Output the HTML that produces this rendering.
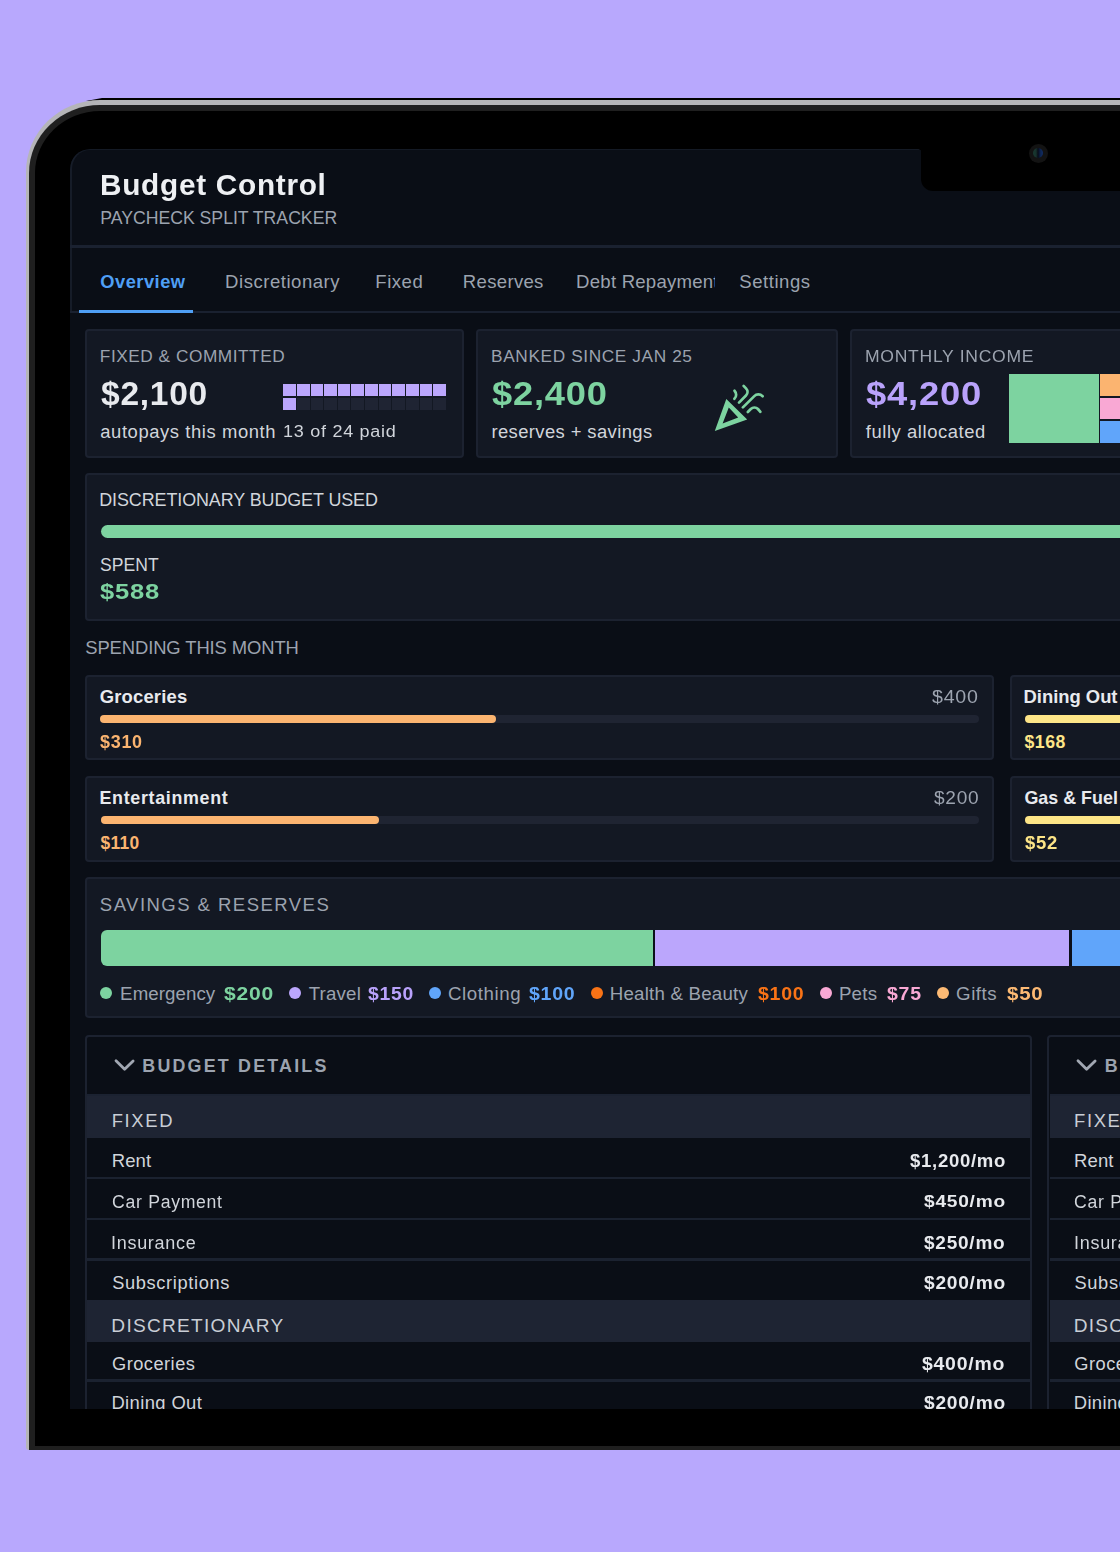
<!DOCTYPE html>
<html><head><meta charset="utf-8"><style>
html,body{margin:0;padding:0;}
body{width:1120px;height:1552px;background:#b8a8fd;position:relative;overflow:hidden;font-family:"Liberation Sans",sans-serif;}
.t{position:absolute;white-space:nowrap;line-height:1;}
.card{position:absolute;background:#131823;border:2px solid #1c2230;border-radius:4px;box-sizing:border-box;}
</style></head><body>
<!-- device frame -->
<div style="position:absolute;left:86px;top:97.9px;width:1100px;height:3px;background:#000;clip-path:polygon(0 100%,16px 0,100% 0,100% 100%)"></div>
<div style="position:absolute;left:26px;top:100px;width:1200px;height:1350px;background:#b5b5b8;border-top-left-radius:74px 72px;border-bottom-left-radius:3px"></div>
<div style="position:absolute;left:29px;top:104.6px;width:1200px;height:1345px;background:#1f1f1f;border-top-left-radius:71px 68px;"></div>
<div style="position:absolute;left:35px;top:111px;width:1200px;height:1334.7px;background:#000;border-top-left-radius:65px 62px;"></div>
<!-- screen -->
<div id="screen" style="position:absolute;left:70px;top:149px;width:1100px;height:1260px;background:#0a0e16;border-top-left-radius:20px;overflow:hidden">
  <div style="position:absolute;left:0;top:0;width:1100px;height:162px;box-sizing:border-box;border-left:2px solid #161c28;border-top:1px solid #141a25;border-top-left-radius:20px"></div>
  <div style="position:absolute;left:0;top:96.3px;width:1100px;height:3px;background:#1a2130"></div>
  <div style="position:absolute;left:0;top:162px;width:1100px;height:2px;background:#1a2130"></div>
  <div style="position:absolute;left:9px;top:161px;width:114px;height:2.6px;background:#4f9ff5"></div>
</div>
<!-- notch -->
<div style="position:absolute;left:921px;top:140px;width:300px;height:50.7px;background:#000;border-bottom-left-radius:12px"></div>
<div style="position:absolute;left:1028.8px;top:143.6px;width:19px;height:19px;border-radius:50%;background:#131313;filter:blur(0.6px)"></div>
<div style="position:absolute;left:1033px;top:148.3px;width:10px;height:10px;border-radius:50%;background:linear-gradient(90deg,#1b4a3e 0%,#1a3f38 30%,#040a1a 50%,#0a2a6a 75%,#123a8a 100%);filter:blur(0.5px);opacity:0.7"></div>
<div style="position:absolute;left:918px;top:149px;width:4px;height:4px;background:radial-gradient(circle at 0 100%, transparent 3.5px, #000 4px)"></div>
<!-- cards row -->
<div class="card" style="left:85.1px;top:328.8px;width:378.7px;height:129.1px"></div>
<div class="card" style="left:475.9px;top:328.8px;width:362.4px;height:129.1px"></div>
<div class="card" style="left:849.7px;top:328.8px;width:400px;height:129.1px"></div>
<div style="position:absolute;left:283.30px;top:383.9px;width:12.6px;height:12.6px;background:#bba6fc"></div><div style="position:absolute;left:296.93px;top:383.9px;width:12.6px;height:12.6px;background:#bba6fc"></div><div style="position:absolute;left:310.56px;top:383.9px;width:12.6px;height:12.6px;background:#bba6fc"></div><div style="position:absolute;left:324.19px;top:383.9px;width:12.6px;height:12.6px;background:#bba6fc"></div><div style="position:absolute;left:337.82px;top:383.9px;width:12.6px;height:12.6px;background:#bba6fc"></div><div style="position:absolute;left:351.45px;top:383.9px;width:12.6px;height:12.6px;background:#bba6fc"></div><div style="position:absolute;left:365.08px;top:383.9px;width:12.6px;height:12.6px;background:#bba6fc"></div><div style="position:absolute;left:378.71px;top:383.9px;width:12.6px;height:12.6px;background:#bba6fc"></div><div style="position:absolute;left:392.34px;top:383.9px;width:12.6px;height:12.6px;background:#bba6fc"></div><div style="position:absolute;left:405.97px;top:383.9px;width:12.6px;height:12.6px;background:#bba6fc"></div><div style="position:absolute;left:419.60px;top:383.9px;width:12.6px;height:12.6px;background:#bba6fc"></div><div style="position:absolute;left:433.23px;top:383.9px;width:12.6px;height:12.6px;background:#bba6fc"></div><div style="position:absolute;left:283.30px;top:397.6px;width:12.6px;height:12.6px;background:#bba6fc"></div><div style="position:absolute;left:296.93px;top:397.6px;width:12.6px;height:12.6px;background:#1f2433"></div><div style="position:absolute;left:310.56px;top:397.6px;width:12.6px;height:12.6px;background:#1f2433"></div><div style="position:absolute;left:324.19px;top:397.6px;width:12.6px;height:12.6px;background:#1f2433"></div><div style="position:absolute;left:337.82px;top:397.6px;width:12.6px;height:12.6px;background:#1f2433"></div><div style="position:absolute;left:351.45px;top:397.6px;width:12.6px;height:12.6px;background:#1f2433"></div><div style="position:absolute;left:365.08px;top:397.6px;width:12.6px;height:12.6px;background:#1f2433"></div><div style="position:absolute;left:378.71px;top:397.6px;width:12.6px;height:12.6px;background:#1f2433"></div><div style="position:absolute;left:392.34px;top:397.6px;width:12.6px;height:12.6px;background:#1f2433"></div><div style="position:absolute;left:405.97px;top:397.6px;width:12.6px;height:12.6px;background:#1f2433"></div><div style="position:absolute;left:419.60px;top:397.6px;width:12.6px;height:12.6px;background:#1f2433"></div><div style="position:absolute;left:433.23px;top:397.6px;width:12.6px;height:12.6px;background:#1f2433"></div>
<svg style="position:absolute;left:700px;top:370px" width="80" height="70" viewBox="700 370 80 70">
 <path fill="#7dd3a0" fill-rule="evenodd" d="M714.8 431 L726.3 399 L747.2 419.4 Z M728.8 407.6 L722.6 423.6 L738.2 417.6 Z"/>
 <g fill="none" stroke="#7dd3a0" stroke-width="2.7" stroke-linecap="round" stroke-linejoin="miter">
  
  <path d="M734.5 390.8 C736.6 393 736.8 396.6 734.4 398.8"/>
  <path d="M743.6 385.9 L746 388.4 C748 390.6 748 393.5 746 395.5 L739 402.6"/>
  <path d="M742.9 407.4 L754.3 396.1 C756.5 393.9 760.2 393.9 762.6 396.2"/>
  <path d="M747.8 412 L750.8 409 C752.8 407 756 407 758 409 L760.4 411.8"/>
 </g>
</svg>
<div style="position:absolute;left:1008.75px;top:374.25px;width:90px;height:68.25px;background:#7dd3a0"></div>
<div style="position:absolute;left:1100.25px;top:374.25px;width:40px;height:21.5px;background:#fbb470"></div>
<div style="position:absolute;left:1100.25px;top:397.75px;width:40px;height:21.5px;background:#f9a8d4"></div>
<div style="position:absolute;left:1100.25px;top:421px;width:40px;height:21.5px;background:#60a5fa"></div>

<!-- discretionary -->
<div class="card" style="left:85.1px;top:472.6px;width:1100px;height:148.6px"></div>
<div style="position:absolute;left:100.7px;top:525.2px;width:1100px;height:13px;border-radius:6.5px;background:#7dd3a0"></div>

<!-- spending cards -->
<div class="card" style="left:85.1px;top:674.8px;width:908.8px;height:85.2px"></div>
<div class="card" style="left:1009.7px;top:674.8px;width:400px;height:85.2px"></div>
<div class="card" style="left:85.1px;top:776px;width:908.8px;height:85.6px"></div>
<div class="card" style="left:1009.6px;top:776px;width:400px;height:85.6px"></div>
<div style="position:absolute;left:100.4px;top:715px;width:878.6px;height:7.7px;border-radius:4px;background:#1f2432"></div>
<div style="position:absolute;left:100.4px;top:715px;width:395.3px;height:7.7px;border-radius:4px;background:#fbb470"></div>
<div style="position:absolute;left:1024.7px;top:715px;width:400px;height:7.7px;border-radius:4px;background:#fde587"></div>
<div style="position:absolute;left:100.6px;top:816.4px;width:878.4px;height:7.7px;border-radius:4px;background:#1f2432"></div>
<div style="position:absolute;left:100.6px;top:816.4px;width:278.5px;height:7.7px;border-radius:4px;background:#fbb470"></div>
<div style="position:absolute;left:1025.1px;top:816.4px;width:400px;height:7.7px;border-radius:4px;background:#fde587"></div>

<!-- savings -->
<div class="card" style="left:85.1px;top:877.1px;width:1100px;height:141.4px"></div>
<div style="position:absolute;left:100.7px;top:930.3px;width:1100px;height:36.1px;border-radius:6px;overflow:hidden;background:#0b0f19">
  <div style="position:absolute;left:0;top:0;width:552.2px;height:100%;background:#7dd3a0"></div>
  <div style="position:absolute;left:554.4px;top:0;width:414.3px;height:100%;background:#bba6fc"></div>
  <div style="position:absolute;left:971.6px;top:0;width:300px;height:100%;background:#60a5fa"></div>
</div>
<div style="position:absolute;left:100.1px;top:987.2px;width:12px;height:12px;border-radius:50%;background:#7dd3a0"></div>
<div style="position:absolute;left:288.6px;top:987.2px;width:12px;height:12px;border-radius:50%;background:#bba6fc"></div>
<div style="position:absolute;left:429.4px;top:987.2px;width:12px;height:12px;border-radius:50%;background:#60a5fa"></div>
<div style="position:absolute;left:591.4px;top:987.2px;width:12px;height:12px;border-radius:50%;background:#f97316"></div>
<div style="position:absolute;left:819.9px;top:987.2px;width:12px;height:12px;border-radius:50%;background:#f9a8d4"></div>
<div style="position:absolute;left:936.6px;top:987.2px;width:12px;height:12px;border-radius:50%;background:#fdba74"></div>

<!-- budget details -->
<div id="bd" style="position:absolute;left:0;top:0;width:1120px;height:1408.7px;overflow:hidden">

<div style="position:absolute;left:85.1px;top:1034.5px;width:946.5px;height:500px;background:#0a0e16;border:2px solid #1c2230;border-radius:4px;box-sizing:border-box"></div>
<div style="position:absolute;left:87.3px;top:1093.9px;width:942.8px;height:43.9px;background:#1e2433;border-top:2px solid #1b2231;box-sizing:border-box"></div>
<div style="position:absolute;left:87.3px;top:1299.7px;width:942.8px;height:42.2px;background:#1e2433"></div>
<div style="position:absolute;left:87.3px;top:1176.6px;width:942.8px;height:2.4px;background:#1b2230"></div>
<div style="position:absolute;left:87.3px;top:1217.6px;width:942.8px;height:2.4px;background:#1b2230"></div>
<div style="position:absolute;left:87.3px;top:1258.3px;width:942.8px;height:2.4px;background:#1b2230"></div>
<div style="position:absolute;left:87.3px;top:1379.2px;width:942.8px;height:2.4px;background:#1b2230"></div>
<svg style="position:absolute;left:113px;top:1058px" width="24" height="16" viewBox="0 0 24 16"><path d="M3 2.8 L11.6 11.3 L20.1 2.9" fill="none" stroke="#a1a7b2" stroke-width="2.8" stroke-linecap="round" stroke-linejoin="round"/></svg>

<div style="position:absolute;left:1047.3999999999999px;top:1034.5px;width:946.5px;height:500px;background:#0a0e16;border:2px solid #1c2230;border-radius:4px;box-sizing:border-box"></div>
<div style="position:absolute;left:1049.6px;top:1093.9px;width:942.8px;height:43.9px;background:#1e2433;border-top:2px solid #1b2231;box-sizing:border-box"></div>
<div style="position:absolute;left:1049.6px;top:1299.7px;width:942.8px;height:42.2px;background:#1e2433"></div>
<div style="position:absolute;left:1049.6px;top:1176.6px;width:942.8px;height:2.4px;background:#1b2230"></div>
<div style="position:absolute;left:1049.6px;top:1217.6px;width:942.8px;height:2.4px;background:#1b2230"></div>
<div style="position:absolute;left:1049.6px;top:1258.3px;width:942.8px;height:2.4px;background:#1b2230"></div>
<div style="position:absolute;left:1049.6px;top:1379.2px;width:942.8px;height:2.4px;background:#1b2230"></div>
<svg style="position:absolute;left:1075.3px;top:1058px" width="24" height="16" viewBox="0 0 24 16"><path d="M3 2.8 L11.6 11.3 L20.1 2.9" fill="none" stroke="#a1a7b2" stroke-width="2.8" stroke-linecap="round" stroke-linejoin="round"/></svg>
<div class="t" style="left:99.93px;top:170px;font-size:29.43px;letter-spacing:0.700px;font-weight:700;color:#eef0f3;transform:scaleX(1.0120);transform-origin:0 0">Budget Control</div>
<div class="t" style="left:100.29px;top:210px;font-size:17.68px;letter-spacing:-0.021px;color:#9ca3af">PAYCHECK SPLIT TRACKER</div>
<div class="t" style="left:100.37px;top:273px;font-size:18.29px;letter-spacing:0.481px;font-weight:700;color:#4f9ff5">Overview</div>
<div class="t" style="left:225.12px;top:273px;font-size:18.55px;letter-spacing:0.528px;color:#9ca3af">Discretionary</div>
<div class="t" style="left:375.32px;top:273px;font-size:18.55px;letter-spacing:0.516px;color:#9ca3af">Fixed</div>
<div class="t" style="left:462.82px;top:273px;font-size:18.55px;letter-spacing:0.327px;color:#9ca3af">Reserves</div>
<div class="t" style="left:739.26px;top:273px;font-size:18.55px;letter-spacing:0.553px;color:#9ca3af">Settings</div>
<div style="position:absolute;left:0;top:0;width:715px;height:400px;overflow:hidden"><div class="t" style="left:576.11px;top:273px;font-size:18.60px;letter-spacing:0.220px;color:#9ca3af">Debt Repayment</div></div>
<div class="t" style="left:99.87px;top:348px;font-size:17.25px;letter-spacing:0.529px;color:#9ca3af">FIXED &amp; COMMITTED</div>
<div class="t" style="left:100.68px;top:378px;font-size:32.29px;letter-spacing:0.700px;font-weight:700;color:#e8eaee;transform:scaleX(1.0391);transform-origin:0 0">$2,100</div>
<div class="t" style="left:100.26px;top:423px;font-size:18.41px;letter-spacing:0.586px;color:#d1d5db">autopays this month</div>
<div class="t" style="left:282.79px;top:423px;font-size:17.25px;letter-spacing:0.700px;color:#d1d5db;transform:scaleX(1.0429);transform-origin:0 0">13 of 24 paid</div>
<div class="t" style="left:491.12px;top:348px;font-size:17.25px;letter-spacing:0.613px;color:#9ca3af">BANKED SINCE JAN 25</div>
<div class="t" style="left:492.18px;top:378px;font-size:32.29px;letter-spacing:0.700px;font-weight:700;color:#7dd3a0;transform:scaleX(1.1245);transform-origin:0 0">$2,400</div>
<div class="t" style="left:491.40px;top:423px;font-size:18.41px;letter-spacing:0.400px;color:#d1d5db">reserves + savings</div>
<div class="t" style="left:864.87px;top:348px;font-size:17.25px;letter-spacing:0.700px;color:#9ca3af;transform:scaleX(1.0174);transform-origin:0 0">MONTHLY INCOME</div>
<div class="t" style="left:865.68px;top:378px;font-size:32.29px;letter-spacing:0.700px;font-weight:700;color:#b9a2fb;transform:scaleX(1.1265);transform-origin:0 0">$4,200</div>
<div class="t" style="left:865.82px;top:423px;font-size:18.41px;letter-spacing:0.568px;color:#d1d5db">fully allocated</div>
<div class="t" style="left:99.26px;top:492px;font-size:17.95px;letter-spacing:-0.100px;color:#d1d5db">DISCRETIONARY BUDGET USED</div>
<div class="t" style="left:100.00px;top:557px;font-size:17.54px;letter-spacing:0.075px;color:#d1d5db">SPENT</div>
<div class="t" style="left:100.48px;top:581px;font-size:22.00px;letter-spacing:0.700px;font-weight:700;color:#7dd3a0;transform:scaleX(1.1603);transform-origin:0 0">$588</div>
<div class="t" style="left:85.26px;top:639px;font-size:18.41px;letter-spacing:-0.100px;color:#9ca3af">SPENDING THIS MONTH</div>
<div class="t" style="left:99.66px;top:688px;font-size:18.43px;letter-spacing:0.182px;font-weight:700;color:#e8eaee">Groceries</div>
<div class="t" style="left:932.41px;top:688px;font-size:18.70px;letter-spacing:0.700px;color:#9ca3af;transform:scaleX(1.0507);transform-origin:0 0">$400</div>
<div class="t" style="left:100.22px;top:734px;font-size:17.71px;letter-spacing:0.700px;font-weight:700;color:#fbb470;transform:scaleX(1.0150);transform-origin:0 0">$310</div>
<div class="t" style="left:1023.59px;top:688px;font-size:18.43px;letter-spacing:-0.023px;font-weight:700;color:#e8eaee">Dining Out</div>
<div class="t" style="left:1024.52px;top:734px;font-size:17.71px;letter-spacing:0.478px;font-weight:700;color:#fde587">$168</div>
<div class="t" style="left:99.53px;top:790px;font-size:17.86px;letter-spacing:0.681px;font-weight:700;color:#e8eaee">Entertainment</div>
<div class="t" style="left:934.22px;top:789px;font-size:18.12px;letter-spacing:0.700px;color:#9ca3af;transform:scaleX(1.0538);transform-origin:0 0">$200</div>
<div class="t" style="left:100.43px;top:835px;font-size:17.43px;letter-spacing:0.331px;font-weight:700;color:#fbb470">$110</div>
<div class="t" style="left:1024.39px;top:790px;font-size:17.86px;letter-spacing:0.027px;font-weight:700;color:#e8eaee">Gas &amp; Fuel</div>
<div class="t" style="left:1024.93px;top:835px;font-size:17.43px;letter-spacing:0.700px;font-weight:700;color:#fde587;transform:scaleX(1.0615);transform-origin:0 0">$52</div>
<div class="t" style="left:99.86px;top:896px;font-size:18.55px;letter-spacing:1.450px;color:#9ca3af">SAVINGS &amp; RESERVES</div>
<div class="t" style="left:120.10px;top:985px;font-size:18.70px;letter-spacing:0.068px;color:#9ca3af">Emergency</div>
<div class="t" style="left:224.42px;top:985px;font-size:18.43px;letter-spacing:0.700px;font-weight:700;color:#7dd3a0;transform:scaleX(1.1433);transform-origin:0 0">$200</div>
<div class="t" style="left:308.63px;top:985px;font-size:18.70px;letter-spacing:0.197px;color:#9ca3af">Travel</div>
<div class="t" style="left:368.12px;top:985px;font-size:18.43px;letter-spacing:0.700px;font-weight:700;color:#b9a2fb;transform:scaleX(1.0510);transform-origin:0 0">$150</div>
<div class="t" style="left:447.97px;top:985px;font-size:18.70px;letter-spacing:0.599px;color:#9ca3af">Clothing</div>
<div class="t" style="left:529.22px;top:985px;font-size:18.43px;letter-spacing:0.700px;font-weight:700;color:#60a5fa;transform:scaleX(1.0605);transform-origin:0 0">$100</div>
<div class="t" style="left:609.80px;top:985px;font-size:18.70px;letter-spacing:0.206px;color:#9ca3af">Health &amp; Beauty</div>
<div class="t" style="left:758.22px;top:985px;font-size:18.43px;letter-spacing:0.700px;font-weight:700;color:#f97316;transform:scaleX(1.0605);transform-origin:0 0">$100</div>
<div class="t" style="left:838.90px;top:985px;font-size:18.70px;letter-spacing:0.249px;color:#9ca3af">Pets</div>
<div class="t" style="left:886.92px;top:985px;font-size:18.43px;letter-spacing:0.700px;font-weight:700;color:#f9a8d4;transform:scaleX(1.0578);transform-origin:0 0">$75</div>
<div class="t" style="left:956.07px;top:985px;font-size:18.70px;letter-spacing:0.541px;color:#9ca3af">Gifts</div>
<div class="t" style="left:1006.52px;top:985px;font-size:18.43px;letter-spacing:0.700px;font-weight:700;color:#fdba74;transform:scaleX(1.1087);transform-origin:0 0">$50</div>
<div class="t" style="left:142.33px;top:1058px;font-size:17.86px;letter-spacing:2.201px;font-weight:700;color:#9ca3af">BUDGET DETAILS</div>
<div class="t" style="left:111.73px;top:1112px;font-size:18.41px;letter-spacing:1.637px;color:#c9ced6">FIXED</div>
<div class="t" style="left:111.72px;top:1152px;font-size:18.55px;letter-spacing:0.086px;color:#d1d5db">Rent</div>
<div class="t" style="left:112.02px;top:1194px;font-size:17.54px;letter-spacing:0.700px;color:#d1d5db;transform:scaleX(1.0065);transform-origin:0 0">Car Payment</div>
<div class="t" style="left:111.31px;top:1235px;font-size:17.68px;letter-spacing:0.700px;color:#d1d5db;transform:scaleX(1.0183);transform-origin:0 0">Insurance</div>
<div class="t" style="left:112.17px;top:1274px;font-size:18.26px;letter-spacing:0.647px;color:#d1d5db">Subscriptions</div>
<div class="t" style="left:111.37px;top:1316px;font-size:19.13px;letter-spacing:1.249px;color:#c9ced6">DISCRETIONARY</div>
<div class="t" style="left:111.99px;top:1355px;font-size:18.26px;letter-spacing:0.476px;color:#d1d5db">Groceries</div>
<div class="t" style="left:111.43px;top:1394px;font-size:18.41px;letter-spacing:0.386px;color:#d1d5db">Dining Out</div>
<div class="t" style="left:909.52px;top:1152px;font-size:18.29px;letter-spacing:0.700px;font-weight:700;color:#e8eaee;transform:scaleX(1.0140);transform-origin:0 0">$1,200/mo</div>
<div class="t" style="left:923.73px;top:1193px;font-size:17.29px;letter-spacing:0.700px;font-weight:700;color:#e8eaee;transform:scaleX(1.1062);transform-origin:0 0">$450/mo</div>
<div class="t" style="left:923.73px;top:1235px;font-size:17.43px;letter-spacing:0.700px;font-weight:700;color:#e8eaee;transform:scaleX(1.0909);transform-origin:0 0">$250/mo</div>
<div class="t" style="left:923.72px;top:1274px;font-size:18.00px;letter-spacing:0.700px;font-weight:700;color:#e8eaee;transform:scaleX(1.0648);transform-origin:0 0">$200/mo</div>
<div class="t" style="left:922.12px;top:1355px;font-size:18.00px;letter-spacing:0.700px;font-weight:700;color:#e8eaee;transform:scaleX(1.0793);transform-origin:0 0">$400/mo</div>
<div class="t" style="left:923.72px;top:1394px;font-size:18.14px;letter-spacing:0.700px;font-weight:700;color:#e8eaee;transform:scaleX(1.0569);transform-origin:0 0">$200/mo</div>
<div class="t" style="left:1104.63px;top:1058px;font-size:17.86px;letter-spacing:2.201px;font-weight:700;color:#9ca3af">BUDGET DETAILS</div>
<div class="t" style="left:1074.03px;top:1112px;font-size:18.41px;letter-spacing:1.637px;color:#c9ced6">FIXED</div>
<div class="t" style="left:1074.02px;top:1152px;font-size:18.55px;letter-spacing:0.086px;color:#d1d5db">Rent</div>
<div class="t" style="left:1074.32px;top:1194px;font-size:17.54px;letter-spacing:0.700px;color:#d1d5db;transform:scaleX(1.0065);transform-origin:0 0">Car Payment</div>
<div class="t" style="left:1073.61px;top:1235px;font-size:17.68px;letter-spacing:0.700px;color:#d1d5db;transform:scaleX(1.0183);transform-origin:0 0">Insurance</div>
<div class="t" style="left:1074.47px;top:1274px;font-size:18.26px;letter-spacing:0.647px;color:#d1d5db">Subscriptions</div>
<div class="t" style="left:1073.67px;top:1316px;font-size:19.13px;letter-spacing:1.249px;color:#c9ced6">DISCRETIONARY</div>
<div class="t" style="left:1074.29px;top:1355px;font-size:18.26px;letter-spacing:0.476px;color:#d1d5db">Groceries</div>
<div class="t" style="left:1073.73px;top:1394px;font-size:18.41px;letter-spacing:0.386px;color:#d1d5db">Dining Out</div>
</div>
</body></html>
